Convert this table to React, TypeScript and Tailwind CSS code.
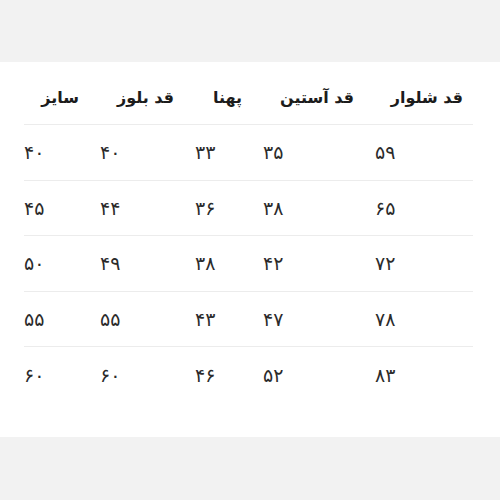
const headers = ["سایز", "قد بلوز", "پهنا", "قد آستین", "قد شلوار"];

const rows = [
  ["۴۰", "۴۰", "۳۳", "۳۵", "۵۹"],
  ["۴۵", "۴۴", "۳۶", "۳۸", "۶۵"],
  ["۵۰", "۴۹", "۳۸", "۴۲", "۷۲"],
  ["۵۵", "۵۵", "۴۳", "۴۷", "۷۸"],
  ["۶۰", "۶۰", "۴۶", "۵۲", "۸۳"],
];

const cols = "grid grid-cols-[76px_95px_68px_112px_98px]";

export default function App() {
  return (
    <div className="h-[500px] w-[500px] bg-[#f2f2f2] pt-[62px] font-['DejaVu_Sans',sans-serif]">
      <div className="h-[375px] bg-white pl-[24px]">
        <div className="w-[449px]">
          <div className={`${cols} h-[63px] items-end border-b border-[#ececec] pb-[14px]`}>
            {headers.map((h, i) => (
              <div
                key={i}
                dir="rtl"
                className={`text-right text-[16px] font-bold leading-[24px] text-[#1c1c1c] ${
                  i === 4 ? "pr-[10px]" : "pr-[21px]"
                }`}
              >
                {h}
              </div>
            ))}
          </div>
          {rows.map((r, ri) => (
            <div
              key={ri}
              className={`${cols} h-[55.5px] items-center ${
                ri < rows.length - 1 ? "border-b border-[#ececec]" : ""
              }`}
            >
              {r.map((v, ci) => (
                <div key={ci} className="text-[19px] leading-[24px] text-[#2b2b2b]">
                  {v}
                </div>
              ))}
            </div>
          ))}
        </div>
      </div>
    </div>
  );
}
